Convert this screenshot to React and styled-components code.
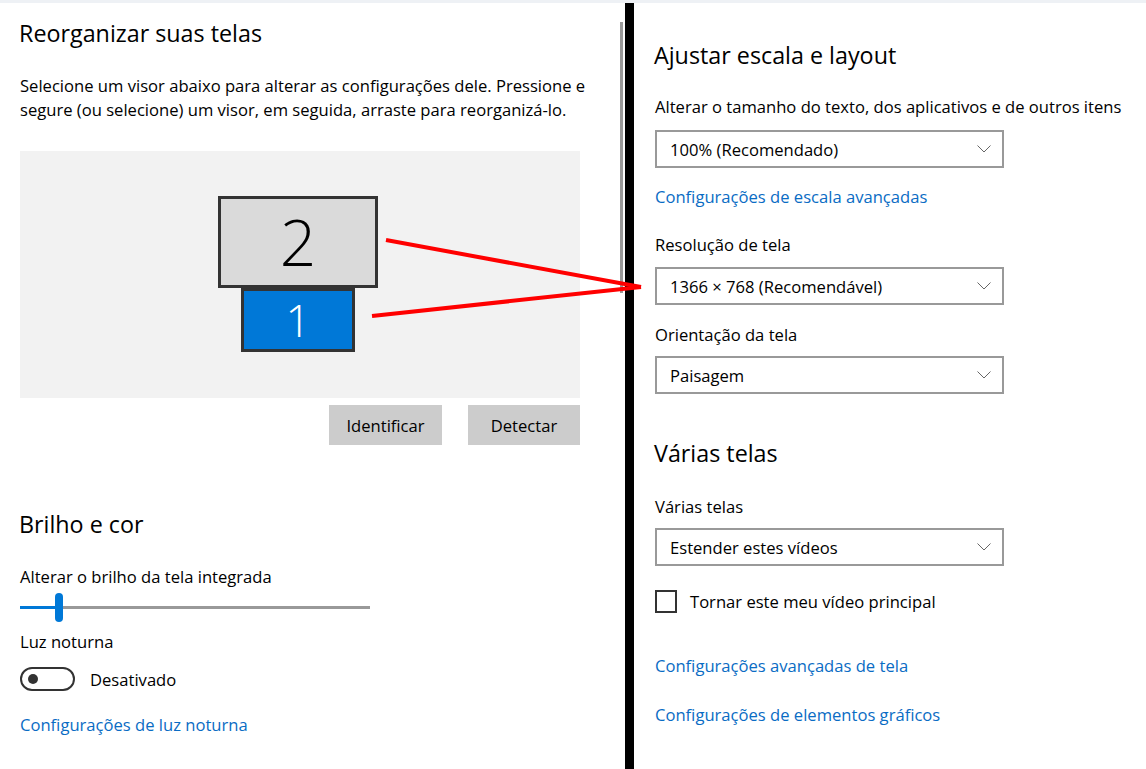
import React from "react";
import styled, { createGlobalStyle } from "styled-components";

const Global = createGlobalStyle`
  html, body { margin: 0; padding: 0; background: #fff; }
  body { width: 1146px; height: 769px; overflow: hidden; font-family: "Open Sans", "Noto Sans", sans-serif; color: #000; }
  * { box-sizing: border-box; }
`;

const FS = 16.6;

const Page = styled.div`
  position: relative;
  width: 1146px;
  height: 769px;
  display: flex;
  flex-direction: column;
  background: #fff;
`;

const TopStrip = styled.div`
  height: 3px;
  background: #eef1f5;
  flex: none;
`;

const Columns = styled.div`
  flex: 1;
  display: flex;
  min-height: 0;
`;

const LeftPane = styled.div`
  width: 620px;
  flex: none;
  padding-left: 20px;
  display: flex;
  flex-direction: column;
`;

const ScrollTrack = styled.div`
  width: 3px;
  flex: none;
  padding-top: 19px;
`;

const ScrollThumb = styled.div`
  width: 3px;
  height: 271px;
  background: #9a9a9a;
`;

const Divider = styled.div`
  width: 9px;
  margin-left: 2px;
  flex: none;
  background: #000;
`;

const RightPane = styled.div`
  flex: 1;
  padding-left: 21px;
  display: flex;
  flex-direction: column;
`;

const Heading = styled.h2`
  margin: ${(p) => p.$mt}px 0 0 -1px;
  font-size: 23.3px;
  font-weight: 400;
  line-height: 32px;
  height: 32px;
  white-space: nowrap;
`;

const Text = styled.div`
  margin-top: ${(p) => p.$mt || 0}px;
  font-size: ${FS}px;
  line-height: 24px;
  white-space: nowrap;
`;

const Paragraph = styled.p`
  margin: ${(p) => p.$mt}px 0 0;
  font-size: ${FS}px;
  line-height: 24px;
  width: 580px;
`;

const Link = styled.a`
  display: block;
  margin-top: ${(p) => p.$mt}px;
  font-size: ${FS}px;
  line-height: 24px;
  color: #0a6cc4;
  text-decoration: none;
  white-space: nowrap;
`;

const Arrangement = styled.div`
  margin-top: ${(p) => p.$mt}px;
  width: 560px;
  height: 247px;
  background: #f2f2f2;
  display: flex;
  flex-direction: column;
  align-items: center;
  padding-top: 45px;
`;

const Monitor = styled.div`
  width: ${(p) => p.$w}px;
  height: ${(p) => p.$h}px;
  margin-left: -4px;
  border: 3px solid #333;
  background: ${(p) => (p.$active ? "#0078d7" : "#dadada")};
  color: ${(p) => (p.$active ? "#fff" : "#000")};
  display: flex;
  align-items: center;
  justify-content: center;
  font-size: ${(p) => p.$fs}px;
  font-weight: 300;
  line-height: 1;
`;

const ButtonRow = styled.div`
  margin-top: 7px;
  width: 560px;
  display: flex;
  justify-content: flex-end;
  gap: 26px;
`;

const Button = styled.button`
  width: ${(p) => p.$w}px;
  height: 40px;
  border: none;
  background: #cccccc;
  font-family: inherit;
  font-size: ${FS}px;
  color: #000;
  padding: 0;
`;

const Slider = styled.div`
  margin-top: 3px;
  width: 350px;
  height: 30px;
  display: flex;
  align-items: center;
`;

const TrackFilled = styled.div`
  width: 35px;
  height: 3px;
  background: #0078d7;
`;

const Thumb = styled.div`
  width: 8px;
  height: 29px;
  border-radius: 4px;
  background: #0078d7;
`;

const TrackRest = styled.div`
  flex: 1;
  height: 3px;
  background: #999;
`;

const ToggleRow = styled.div`
  margin-top: 13px;
  display: flex;
  align-items: center;
  gap: 15px;
  height: 24px;
  font-size: ${FS}px;
`;

const Toggle = styled.div`
  width: 55px;
  height: 24px;
  border: 2px solid #333;
  border-radius: 12px;
  display: flex;
  align-items: center;
  padding-left: 6px;
`;

const Knob = styled.div`
  width: 10px;
  height: 10px;
  border-radius: 50%;
  background: #333;
`;

const Select = styled.div`
  margin-top: ${(p) => p.$mt}px;
  width: 349px;
  height: 38px;
  border: 2px solid #999;
  display: flex;
  align-items: center;
  justify-content: space-between;
  padding: 0 11px 0 13px;
  font-size: ${FS}px;
`;

const CheckRow = styled.label`
  margin-top: ${(p) => p.$mt}px;
  display: flex;
  align-items: center;
  gap: 13px;
  font-size: ${FS}px;
  height: 23px;
`;

const CheckBox = styled.span`
  width: 22px;
  height: 23px;
  border: 2px solid #333;
  flex: none;
`;

const Overlay = styled.svg`
  position: absolute;
  left: 0;
  top: 0;
  pointer-events: none;
`;

const Chevron = () => (
  <svg width="14" height="8" viewBox="0 0 14 8">
    <path d="M0.5 0.5 L7 7 L13.5 0.5" fill="none" stroke="#666" strokeWidth="1" />
  </svg>
);

const Dropdown = ({ mt, children }) => (
  <Select $mt={mt}>
    <span>{children}</span>
    <Chevron />
  </Select>
);

export default function App() {
  return (
    <Page>
      <Global />
      <TopStrip />
      <Columns>
        <LeftPane>
          <Heading $mt={14}>Reorganizar suas telas</Heading>
          <Paragraph $mt={25}>
            Selecione um visor abaixo para alterar as configurações dele. Pressione e segure (ou
            selecione) um visor, em seguida, arraste para reorganizá-lo.
          </Paragraph>
          <Arrangement $mt={29}>
            <Monitor $w={160} $h={92} $fs={64}>2</Monitor>
            <Monitor $w={114} $h={64} $fs={44} $active>1</Monitor>
          </Arrangement>
          <ButtonRow>
            <Button $w={113}>Identificar</Button>
            <Button $w={112}>Detectar</Button>
          </ButtonRow>
          <Heading $mt={63}>Brilho e cor</Heading>
          <Text $mt={25}>Alterar o brilho da tela integrada</Text>
          <Slider>
            <TrackFilled />
            <Thumb />
            <TrackRest />
          </Slider>
          <Text $mt={8}>Luz noturna</Text>
          <ToggleRow>
            <Toggle><Knob /></Toggle>
            <span>Desativado</span>
          </ToggleRow>
          <Link $mt={22}>Configurações de luz noturna</Link>
        </LeftPane>
        <ScrollTrack><ScrollThumb /></ScrollTrack>
        <Divider />
        <RightPane>
          <Heading $mt={36}>Ajustar escala e layout</Heading>
          <Text $mt={24}>Alterar o tamanho do texto, dos aplicativos e de outros itens</Text>
          <Dropdown mt={11}>100% (Recomendado)</Dropdown>
          <Link $mt={17}>Configurações de escala avançadas</Link>
          <Text $mt={24}>Resolução de tela</Text>
          <Dropdown mt={10}>1366 × 768 (Recomendável)</Dropdown>
          <Text $mt={18}>Orientação da tela</Text>
          <Dropdown mt={9}>Paisagem</Dropdown>
          <Heading $mt={43}>Várias telas</Heading>
          <Text $mt={26}>Várias telas</Text>
          <Dropdown mt={9}>Estender estes vídeos</Dropdown>
          <CheckRow $mt={24}>
            <CheckBox />
            Tornar este meu vídeo principal
          </CheckRow>
          <Link $mt={41}>Configurações avançadas de tela</Link>
          <Link $mt={25}>Configurações de elementos gráficos</Link>
        </RightPane>
      </Columns>
      <Overlay width="1146" height="769" viewBox="0 0 1146 769">
        <line x1="386" y1="240" x2="641" y2="287" stroke="#ff0000" strokeWidth="4" />
        <line x1="372" y1="316" x2="641" y2="287" stroke="#ff0000" strokeWidth="4" />
      </Overlay>
    </Page>
  );
}
